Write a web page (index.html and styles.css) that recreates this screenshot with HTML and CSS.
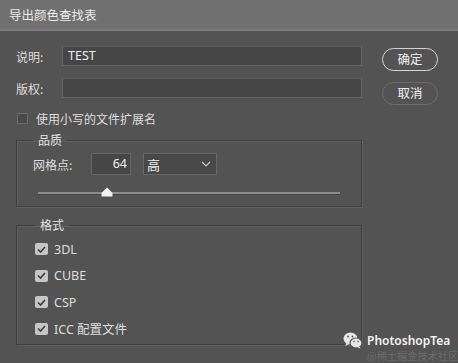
FILE: index.html
```html
<!DOCTYPE html>
<html lang="zh-CN">
<head>
    <meta charset="UTF-8">
    <meta name="viewport" content="width=device-width, initial-scale=1.0">
    <title>导出颜色查找表</title>

    <link rel="stylesheet" href="styles.css">
</head>
<body>
    <div class="dialog">
        <div class="titlebar">导出颜色查找表</div>

        <div class="content">
            <div class="main">
                <div class="field-row">
                    <span class="label">说明:</span>
                    <div class="text-input">TEST</div>
                </div>
                <div class="field-row">
                    <span class="label">版权:</span>
                    <div class="text-input"></div>
                </div>

                <div class="check-row">
                    <span class="checkbox"></span>
                    <span>使用小写的文件扩展名</span>
                </div>

                <fieldset class="group quality">
                    <legend>品质</legend>
                    <div class="grid-row">
                        <span class="grid-label">网格点:</span>
                        <div class="num-input">64</div>
                        <div class="select">
                            <span>高</span>
                            <svg width="10" height="6" viewBox="0 0 10 6"><path d="M1 1 L5 5 L9 1" fill="none" stroke="#c8c8c8" stroke-width="1.2"/></svg>
                        </div>
                    </div>
                    <div class="slider">
                        <div class="track"></div>
                        <svg class="thumb" width="12" height="10" viewBox="0 0 12 10"><path d="M6 0.5 L11.5 6 L11.5 9.5 L0.5 9.5 L0.5 6 Z" fill="#f2f2f2"/></svg>
                    </div>
                </fieldset>

                <fieldset class="group format">
                    <legend>格式</legend>
                    <div class="format-row">
                        <span class="checkbox checked"><svg width="9" height="7" viewBox="0 0 9 7"><path d="M1 3.5 L3.5 6 L8 1" fill="none" stroke="#3c3c3c" stroke-width="1.6"/></svg></span>
                        <span>3DL</span>
                    </div>
                    <div class="format-row">
                        <span class="checkbox checked"><svg width="9" height="7" viewBox="0 0 9 7"><path d="M1 3.5 L3.5 6 L8 1" fill="none" stroke="#3c3c3c" stroke-width="1.6"/></svg></span>
                        <span>CUBE</span>
                    </div>
                    <div class="format-row">
                        <span class="checkbox checked"><svg width="9" height="7" viewBox="0 0 9 7"><path d="M1 3.5 L3.5 6 L8 1" fill="none" stroke="#3c3c3c" stroke-width="1.6"/></svg></span>
                        <span>CSP</span>
                    </div>
                    <div class="format-row">
                        <span class="checkbox checked"><svg width="9" height="7" viewBox="0 0 9 7"><path d="M1 3.5 L3.5 6 L8 1" fill="none" stroke="#3c3c3c" stroke-width="1.6"/></svg></span>
                        <span>ICC 配置文件</span>
                    </div>
                </fieldset>
            </div>

            <div class="buttons">
                <div class="btn primary">确定</div>
                <div class="btn">取消</div>
            </div>
        </div>

        <div class="watermark">
            <div class="wm-line">
                <svg width="20" height="17" viewBox="0 0 20 17">
                    <ellipse cx="7.5" cy="6.5" rx="7" ry="6" fill="#e6e6e6"/>
                    <path d="M3 11 L2.5 14 L6 12 Z" fill="#e6e6e6"/>
                    <ellipse cx="13" cy="11" rx="6" ry="5" fill="#e6e6e6" stroke="#535353" stroke-width="1.2"/>
                    <path d="M16.5 14.5 L17.5 16.5 L14.5 15.5 Z" fill="#e6e6e6"/>
                    <circle cx="5" cy="4.5" r="0.9" fill="#535353"/>
                    <circle cx="9.5" cy="4.5" r="0.9" fill="#535353"/>
                    <circle cx="11" cy="9.5" r="0.8" fill="#535353"/>
                    <circle cx="15" cy="9.5" r="0.8" fill="#535353"/>
                </svg>
                <span class="wm-name">PhotoshopTea</span>
            </div>
            <div class="wm-sub">@稀土掘金技术社区</div>
        </div>
    </div>
</body>
</html>
```

FILE: styles.css
```css
body {
    margin: 0;
    background-color: #535353;
}

.dialog {
    position: relative;
    width: 458px;
    height: 363px;
    background-color: #535353;
    color: #dedede;
    font-family: "Noto Sans CJK SC", "Noto Sans", sans-serif;
    font-size: 12px;
    overflow: hidden;
}

.titlebar {
    height: 29px;
    line-height: 29px;
    padding-left: 9px;
    background-color: #707070;
    border-bottom: 2px solid #7b7b7b;
    color: #ececec;
    font-size: 12.5px;
}

.content {
    display: flex;
    padding: 15px 0 0 16px;
}

.main {
    width: 346px;
}

.field-row {
    display: flex;
    align-items: center;
    height: 20px;
    margin-bottom: 12px;
}

.label {
    width: 46px;
}

.text-input {
    flex: 1;
    box-sizing: border-box;
    height: 20px;
    line-height: 18px;
    padding-left: 5px;
    background-color: #464646;
    border: 1px solid #666;
    border-top-color: #5c5c5c;
    color: #eee;
    font-family: "Noto Sans", sans-serif;
    font-size: 12.5px;
}

.check-row {
    display: flex;
    align-items: center;
    height: 16px;
    padding-left: 1px;
    gap: 8px;
}

.checkbox {
    box-sizing: border-box;
    width: 11px;
    height: 11px;
    background-color: #4a4a4a;
    border: 1px solid #6c6c6c;
    border-radius: 1px;
}

.checkbox.checked {
    display: flex;
    align-items: center;
    justify-content: center;
    width: 13px;
    height: 12px;
    background-color: #c6c6c6;
    border: none;
    border-radius: 2px;
}

.group {
    margin: 0;
    padding: 0 0 0 16px;
    border: 1px solid #3f3f3f;
    box-shadow: 1px 1px 0 #606060, inset 1px 1px 0 #606060;
}

.group legend {
    padding: 0 5px;
    line-height: 16px;
    color: #e4e4e4;
}

.quality {
    margin-top: 6px;
    padding-top: 5px;
    padding-bottom: 7px;
}

.grid-row {
    display: flex;
    align-items: center;
    height: 22px;
}

.grid-label {
    width: 58px;
}

.num-input {
    box-sizing: border-box;
    width: 40px;
    height: 22px;
    line-height: 20px;
    padding-right: 3px;
    text-align: right;
    background-color: #464646;
    border: 1px solid #666;
    color: #eee;
    font-family: "Noto Sans", sans-serif;
    font-size: 12.5px;
}

.select {
    box-sizing: border-box;
    display: flex;
    align-items: center;
    justify-content: space-between;
    width: 74px;
    height: 22px;
    margin-left: 12px;
    padding: 0 5px 0 3px;
    background-color: #484848;
    border: 1px solid #666;
    color: #eee;
    font-size: 13px;
}

.slider {
    position: relative;
    height: 12px;
    margin: 12px 0 0 5px;
    width: 302px;
}

.track {
    position: absolute;
    left: 0;
    right: 0;
    top: 5px;
    height: 2px;
    background-color: #8c8c8c;
    border-bottom: 1px solid #444;
}

.thumb {
    position: absolute;
    left: 63px;
    top: 0;
}

.format {
    margin-top: 10px;
    padding: 8px 0 7px 18px;
}

.format-row {
    display: flex;
    align-items: center;
    height: 16px;
    gap: 6px;
    margin-bottom: 10.5px;
    font-family: "Noto Sans", "Noto Sans CJK SC", sans-serif;
    font-size: 12.5px;
}

.format-row:last-child {
    margin-bottom: 0;
}

.buttons {
    display: flex;
    flex-direction: column;
    gap: 11px;
    margin-left: 20px;
    padding-top: 2px;
}

.btn {
    box-sizing: border-box;
    width: 56px;
    height: 23px;
    line-height: 20px;
    text-align: center;
    border: 1.5px solid #6c6c6c;
    border-radius: 12px;
    color: #f0f0f0;
    font-size: 12.5px;
}

.btn.primary {
    border-color: #d4d4d4;
}

.watermark {
    position: absolute;
    left: 343px;
    top: 332px;
}

.wm-line {
    display: flex;
    align-items: center;
    gap: 4px;
}

.wm-name {
    color: #f2f2f2;
    font-family: "Noto Sans", sans-serif;
    font-size: 12px;
    font-weight: 600;
    line-height: 17px;
}

.wm-sub {
    margin: 1px 0 0 24px;
    color: #6c6c6c;
    font-size: 10.2px;
    line-height: 11px;
    white-space: nowrap;
}
```
